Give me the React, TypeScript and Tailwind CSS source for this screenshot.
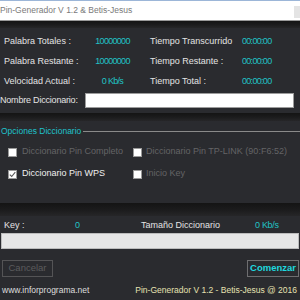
import React from 'react';

const Band = ({ h }: { h: string }) => (
  <div className={`${h} w-full bg-gradient-to-b from-[#141414] via-[#1b1b1c] to-[#262628]`} />
);

const Box = ({ checked = false }: { checked?: boolean }) => (
  <span className="flex h-[9px] w-[9px] shrink-0 items-center justify-center border border-[#9a9a9a] bg-white">
    {checked && (
      <svg width="7" height="7" viewBox="0 0 7 7" fill="none">
        <path d="M0.8 3.6 L2.7 5.5 L6.3 1.2" stroke="#5a5a5a" strokeWidth="1.1" />
      </svg>
    )}
  </span>
);

export default function App() {
  const stats = [
    ['Palabra Totales :', '10000000', 'Tiempo Transcurrido', '00:00:00'],
    ['Palabra Restante :', '10000000', 'Tiempo Restante :', '00:00:00'],
    ['Velocidad Actual :', '0 Kb/s', 'Tiempo Total :', '00:00:00'],
  ];

  return (
    <div className="flex h-[300px] w-[300px] flex-col overflow-hidden bg-[#2a2b2f] font-['Liberation_Sans',Arial,sans-serif] text-[9px] text-[#e4e4e4]">
      {/* title bar */}
      <div className="flex h-[20px] shrink-0 items-center border-t border-[#9cb6d8] bg-white">
        <span className="text-[8.5px] text-[#7a7a7a]">Pin-Generador V 1.2 &amp; Betis-Jesus</span>
        <span className="ml-auto mt-[2px] h-[12px] w-[6px] bg-[#e4e4e4]" />
      </div>
      <div className="h-px shrink-0 bg-[#9a9a9a]" />
      <Band h="h-[7px] shrink-0" />

      {/* stats */}
      <div className="flex flex-col pt-[4px]">
        {stats.map(([l1, v1, l2, v2]) => (
          <div key={l1} className="flex h-[20px] items-center">
            <span className="w-[85px] pl-[4px]">{l1}</span>
            <span className="w-[55px] text-center tracking-[-0.7px] text-[#21c3c6]">{v1}</span>
            <span className="w-[102px] pl-[10px]">{l2}</span>
            <span className="tracking-[-0.7px] text-[#21c3c6]">{v2}</span>
          </div>
        ))}
        <div className="mt-px flex h-[15px] items-center">
          <span className="w-[85px] shrink-0 tracking-[-0.2px]">Nombre Diccionario:</span>
          <div className="h-[15px] w-[209px] border border-[#9c9c9c] bg-white" />
        </div>
      </div>

      <div className="h-[5px] shrink-0" />
      <Band h="h-[8px] shrink-0" />

      {/* options group */}
      <div className="mt-[3px] flex h-[14px] items-center">
        <span className="pl-px text-[8.5px] text-[#1fc2cc]">Opciones Diccionario</span>
        <div className="ml-[2px] flex-1 border-t border-[#8a8a8a]" />
      </div>
      <div className="mt-[8px] flex h-[12px] items-center">
        <div className="flex w-[133px] items-center gap-[5px] pl-[8px]">
          <Box />
          <span className="text-[#646466]">Diccionario Pin Completo</span>
        </div>
        <div className="flex items-center gap-[4px]">
          <Box />
          <span className="text-[#646466]">Diccionario Pin TP-LINK (90:F6:52)</span>
        </div>
      </div>
      <div className="mt-[10px] flex h-[12px] items-center">
        <div className="flex w-[133px] items-center gap-[5px] pl-[8px]">
          <Box checked />
          <span className="text-[#f0f0f0]">Diccionario Pin WPS</span>
        </div>
        <div className="flex items-center gap-[4px]">
          <Box />
          <span className="text-[#646466]">Inicio Key</span>
        </div>
      </div>

      <div className="h-[23px] shrink-0" />
      <Band h="h-[13px] shrink-0" />

      {/* key row */}
      <div className="mt-[4px] flex h-[12px] items-center">
        <span className="w-[75px] pl-[4px]">Key :</span>
        <span className="w-[66px] text-[#21c3c6]">0</span>
        <span className="w-[114px]">Tamaño Diccionario</span>
        <span className="tracking-[-0.3px] text-[#21c3c6]">0 Kb/s</span>
      </div>
      <div className="ml-px mt-[1px] h-[16px] w-[298px] shrink-0 border border-[#bcbcbc] bg-[#e6e6e6]" />

      {/* buttons */}
      <div className="mt-[11px] flex h-[17px] shrink-0 items-stretch justify-between pl-[2px] pr-px">
        <button className="w-[51px] border border-[#545456] text-[9.5px] text-[#5c5c5e]">Cancelar</button>
        <button className="w-[52px] border border-[#6e6e70] text-[9.5px] font-bold text-[#1fd8df]">Comenzar</button>
      </div>

      {/* footer */}
      <div className="mt-[7px] flex items-center justify-between pl-[2px] pr-[3px] text-[8.5px]">
        <span className="text-[#dedede]">www.inforprograma.net</span>
        <span className="text-[#e6e2b2]">Pin-Generador V 1.2 - Betis-Jesus @ 2016</span>
      </div>
    </div>
  );
}
